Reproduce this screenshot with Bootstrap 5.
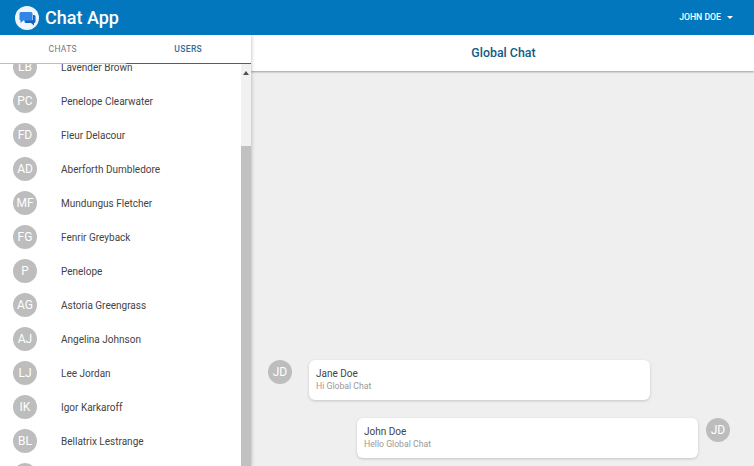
<!DOCTYPE html>
<html lang="en">
<head>
<meta charset="UTF-8">
<title>Chat App</title>
<link rel="stylesheet" href="https://cdn.jsdelivr.net/npm/bootstrap@5.3.0/dist/css/bootstrap.min.css">
<style>
    html, body { height: 100%; overflow: hidden; }
    body { font-family: Roboto, "Liberation Sans", sans-serif; background: #efefef; color: #333; }
    .app-bar { height: 35px; background: #0277bd; color: #fff; padding: 0 21px 0 15px; position: relative; z-index: 3; }
    .app-logo { width: 24px; height: 24px; margin-right: 6px; }
    .app-title { font-size: 18px; font-weight: 500; line-height: 1; }
    .user-menu { font-size: 8.7px; font-weight: 500; }
    .user-caret { border-left: 3px solid transparent; border-right: 3px solid transparent; border-top: 3px solid #fff; margin-left: 6px; }
    .app-main { height: 431px; }
    .side-panel { width: 251px; background: #fff; box-shadow: 0 0 4px rgba(0,0,0,.3); position: relative; z-index: 2; }
    .tab-row { height: 29px; border-bottom: 1px solid #bdbdbd; position: relative; z-index: 1; background: #fff; }
    .tab-item { flex: 1 1 0; font-size: 8.5px; font-weight: 400; letter-spacing: .35px; color: #757575; line-height: 28px; text-align: center; }
    .tab-item.is-active { color: #2a6f9e; font-weight: 500; border-bottom: 1px solid #0277bd; height: 29px; }
    .list-clip { min-height: 0; }
    .people-list { margin-top: -14px; }
    .person-row { height: 34px; padding-left: 13px; }
    .round-pic { width: 24px; height: 24px; border-radius: 50%; background: #bdbdbd; color: #fff; font-size: 12px; flex: none; }
    .person-name { font-size: 10px; color: #444; margin-left: 24px; }
    .fake-track { width: 10px; background: #f1f1f1; flex: none; }
    .track-arrow { height: 17px; color: #505050; }
    .fake-thumb { margin-top: 65px; background: #c1c1c1; flex: 1; }
    .chat-head { height: 36px; padding-left: 2px; background: #fff; box-shadow: 0 1px 2px rgba(0,0,0,.35); font-size: 12.4px; font-weight: 500; color: #155a84; }
    .chat-log { padding: 0 24px 8px 17px; min-height: 0; }
    .msg-row { margin-top: 18px; }
    .msg-box { width: 341px; height: 40px; background: #fff; border-radius: 6px; box-shadow: 0 1px 3px rgba(0,0,0,.18); padding: 7px; }
    .msg-left .msg-box { margin-left: 17px; }
    .msg-right .msg-box { margin-right: 8px; }
    .msg-name { font-size: 10px; line-height: 13px; color: #444; }
    .msg-text { font-size: 8.7px; line-height: 13px; color: #999; }
</style>
</head>
<body>
<header class="app-bar d-flex align-items-center justify-content-between">
    <div class="d-flex align-items-center">
        <svg class="app-logo" viewBox="0 0 24 24">
            <circle cx="12" cy="12" r="12" fill="#eef6fc"/>
            <path d="M18 9h1a1.500 1.500 0 0 1 1.500 1.500v5a1.500 1.500 0 0 1-1.500 1.500v2.500L16 17h-5a1.500 1.500 0 0 1-1.500-1.500V14H18z" fill="#1565c0"/>
            <path d="M6 6h10a1.500 1.500 0 0 1 1.500 1.500v5.500a1.500 1.500 0 0 1-1.500 1.500H8.500l-3 2.500V14.500A1.500 1.500 0 0 1 4.500 13V7.500A1.500 1.500 0 0 1 6 6z" fill="#2f86e6"/>
        </svg>
        <span class="app-title">Chat App</span>
    </div>
    <div class="user-menu d-flex align-items-center">JOHN DOE<span class="user-caret"></span></div>
</header>

<main class="app-main d-flex">
    <aside class="side-panel d-flex flex-column">
        <div class="tab-row d-flex">
            <div class="tab-item">CHATS</div>
            <div class="tab-item is-active">USERS</div>
        </div>
        <div class="list-clip d-flex flex-grow-1 overflow-hidden">
            <div class="flex-grow-1 overflow-hidden">
                <div class="people-list" id="people"></div>
            </div>
            <div class="fake-track d-flex flex-column">
                <div class="track-arrow d-flex align-items-center justify-content-center">
                    <svg width="6" height="4" viewBox="0 0 6 4"><path d="M3 0l3 4H0z" fill="currentColor"/></svg>
                </div>
                <div class="fake-thumb"></div>
            </div>
        </div>
    </aside>

    <section class="flex-grow-1 d-flex flex-column">
        <div class="chat-head d-flex align-items-center justify-content-center">Global Chat</div>
        <div class="chat-log flex-grow-1 d-flex flex-column justify-content-end">
            <div class="msg-row msg-left d-flex">
                <div class="round-pic d-flex align-items-center justify-content-center">JD</div>
                <div class="msg-box">
                    <div class="msg-name">Jane Doe</div>
                    <div class="msg-text">Hi Global Chat</div>
                </div>
            </div>
            <div class="msg-row msg-right d-flex justify-content-end">
                <div class="msg-box">
                    <div class="msg-name">John Doe</div>
                    <div class="msg-text">Hello Global Chat</div>
                </div>
                <div class="round-pic d-flex align-items-center justify-content-center">JD</div>
            </div>
        </div>
    </section>
</main>

<script src="https://cdn.jsdelivr.net/npm/bootstrap@5.3.0/dist/js/bootstrap.bundle.min.js"></script>
<script>
const people = [
    ["LB", "Lavender Brown"],
    ["PC", "Penelope Clearwater"],
    ["FD", "Fleur Delacour"],
    ["AD", "Aberforth Dumbledore"],
    ["MF", "Mundungus Fletcher"],
    ["FG", "Fenrir Greyback"],
    ["P", "Penelope"],
    ["AG", "Astoria Greengrass"],
    ["AJ", "Angelina Johnson"],
    ["LJ", "Lee Jordan"],
    ["IK", "Igor Karkaroff"],
    ["BL", "Bellatrix Lestrange"],
    ["", ""]
];
document.getElementById("people").innerHTML = people.map(p => `
    <div class="person-row d-flex align-items-center">
        <div class="round-pic d-flex align-items-center justify-content-center">${p[0]}</div>
        <div class="person-name">${p[1]}</div>
    </div>`).join("");
</script>
</body>
</html>
